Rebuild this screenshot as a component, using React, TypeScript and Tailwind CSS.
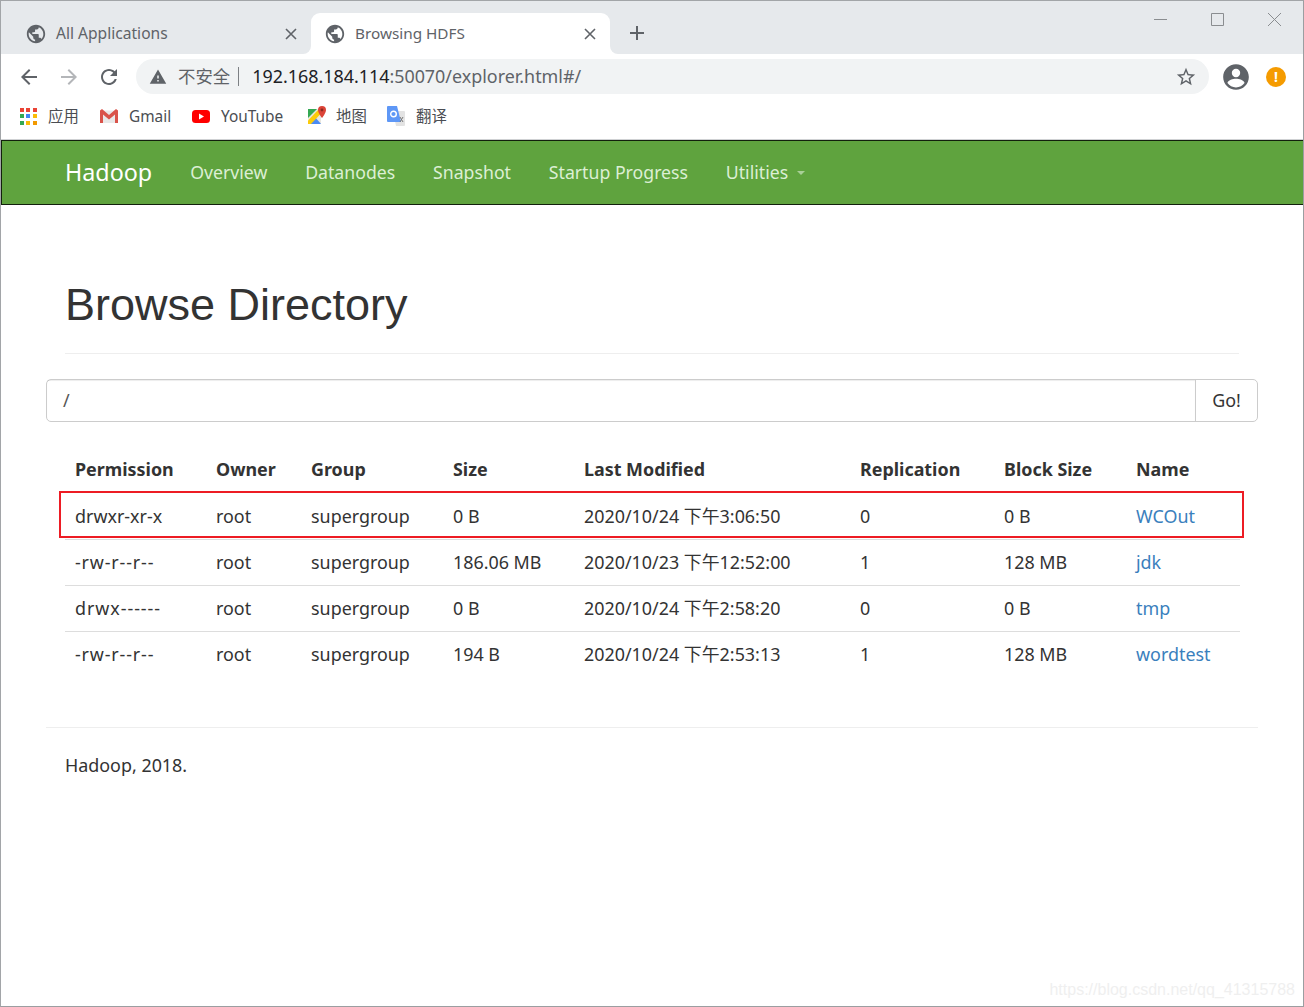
const FONT = "font-['Noto_Sans','Noto_Sans_CJK_SC',sans-serif]";

const PUBLIC_ICON = "M12 2C6.48 2 2 6.48 2 12s4.48 10 10 10 10-4.48 10-10S17.52 2 12 2zm-1 17.93c-3.95-.49-7-3.85-7-7.93 0-.62.08-1.21.21-1.79L9 15v1c0 1.1.9 2 2 2v1.93zm6.9-2.54c-.26-.81-1-1.39-1.9-1.39h-1v-3c0-.55-.45-1-1-1H8v-2h2c.55 0 1-.45 1-1V7h2c1.1 0 2-.9 2-2v-.41c2.93 1.19 5 4.06 5 7.41 0 2.08-.8 3.97-2.1 5.39z";

const rows = [
  { perm: "drwxr-xr-x", spacing: "", size: "0 B", modified: "2020/10/24 下午3:06:50", repl: "0", block: "0 B", name: "WCOut" },
  { perm: "-rw-r--r--", spacing: "tracking-[0.85px]", size: "186.06 MB", modified: "2020/10/23 下午12:52:00", repl: "1", block: "128 MB", name: "jdk" },
  { perm: "drwx------", spacing: "tracking-[0.95px]", size: "0 B", modified: "2020/10/24 下午2:58:20", repl: "0", block: "0 B", name: "tmp" },
  { perm: "-rw-r--r--", spacing: "tracking-[0.85px]", size: "194 B", modified: "2020/10/24 下午2:53:13", repl: "1", block: "128 MB", name: "wordtest" },
];

const headers = ["Permission", "Owner", "Group", "Size", "Last Modified", "Replication", "Block Size", "Name"];

function Globe() {
  return (
    <svg viewBox="0 0 24 24" className="w-[22px] h-[22px] shrink-0" fill="#5f6368">
      <path d={PUBLIC_ICON} />
    </svg>
  );
}

function TabClose() {
  return (
    <svg viewBox="0 0 12 12" className="w-3 h-3 shrink-0" stroke="#5f6368" strokeWidth="1.6" fill="none">
      <path d="M1 1l10 10M11 1L1 11" />
    </svg>
  );
}

function AppsIcon() {
  const colors = ["#ea4335", "#ea4335", "#ea4335", "#34a853", "#4285f4", "#fbbc05", "#34a853", "#fbbc05", "#f29900"];
  return (
    <div className="grid grid-cols-3 gap-[2px] w-[17px] h-[17px] shrink-0">
      {colors.map((c, i) => (
        <span key={i} className="block w-[4px] h-[4px]" style={{ backgroundColor: c }} />
      ))}
    </div>
  );
}

function GmailIcon() {
  return (
    <svg viewBox="0 0 18 14" className="w-[18px] h-[14px] shrink-0">
      <path d="M1 1.500h16V14H1z" fill="#e8e8e8" />
      <path d="M0 1.500V14h3V5.500l6 5 6-5V14h3V1.500L16 0 9 6 2 0z" fill="#d9534a" />
    </svg>
  );
}

function YoutubeIcon() {
  return (
    <svg viewBox="0 0 18 13" className="w-[18px] h-[13px] shrink-0">
      <rect width="18" height="13" rx="3.5" fill="#f00" />
      <path d="M7 3.500v6l5-3z" fill="#fff" />
    </svg>
  );
}

function MapsIcon() {
  return (
    <svg viewBox="0 0 20 20" className="w-5 h-5 shrink-0">
      <path d="M1 3h13v15H1z" fill="#e8e6df" />
      <path d="M1 3h9L1 12z" fill="#34a853" />
      <path d="M1 18h13l-6-7z" fill="#4a8af4" />
      <path d="M1 14.500L11 4l3 1.500v2L4 18H1z" fill="#fbcb0a" />
      <path d="M15 0a4 4 0 0 0-4 4c0 3 4 8 4 8s4-5 4-8a4 4 0 0 0-4-4z" fill="#db4437" />
      <circle cx="15" cy="4" r="1.400" fill="#8c2a20" />
    </svg>
  );
}

function TranslateIcon() {
  return (
    <svg viewBox="0 0 18 20" className="w-[18px] h-5 shrink-0">
      <path d="M6 5h11a1 1 0 0 1 1 1v13a1 1 0 0 1-1 1H9z" fill="#e3e3e3" />
      <path d="M1 0h9l4 16H1a1 1 0 0 1-1-1V1a1 1 0 0 1 1-1z" fill="#5e97f6" />
      <circle cx="6.500" cy="8" r="2.800" fill="none" stroke="#fff" strokeWidth="1.400" />
      <path d="M13 11l3 5M16 11l-3 5" stroke="#777" strokeWidth="1" />
    </svg>
  );
}

function Bookmark({ icon, label, className }: { icon: React.ReactNode; label: string; className: string }) {
  return (
    <div className={`flex items-center ${className}`}>
      {icon}
      <span className="text-[15.4px] text-[#4a4d52]">{label}</span>
    </div>
  );
}

export default function App() {
  return (
    <div className={`${FONT} relative w-[1304px] h-[1007px] overflow-hidden bg-white border border-[#a2a5a8] border-r-[#9b9ea1] border-b-[#9b9ea1]`}>
      {/* tab strip */}
      <div className="h-[53px] bg-[#e6e9ec] flex items-end">
        <div className="w-[310px] h-[41px] flex items-center pl-[24px] pr-[14px] text-[15.6px] text-[#5f6368]">
          <Globe />
          <span className="ml-[9px] flex-1">All Applications</span>
          <TabClose />
        </div>
        <div className="relative w-[299px] h-[41px] bg-white rounded-t-[9px] flex items-center pl-[13px] pr-[14px] text-[15.3px] text-[#5f6368]">
          {/* flared corners at the foot of the active tab */}
          <div className="absolute left-[-8px] bottom-0 w-2 h-2 bg-white"><div className="w-2 h-2 bg-[#e6e9ec] rounded-br-[8px]" /></div>
          <div className="absolute right-[-8px] bottom-0 w-2 h-2 bg-white"><div className="w-2 h-2 bg-[#e6e9ec] rounded-bl-[8px]" /></div>
          <Globe />
          <span className="ml-[9px] flex-1">Browsing HDFS</span>
          <TabClose />
        </div>
        <svg viewBox="0 0 16 16" className="w-4 h-4 ml-[19px] mb-[13px] shrink-0" stroke="#5f6368" strokeWidth="2" fill="none">
          <path d="M8 1v14M1 8h14" />
        </svg>
        <div className="flex-1 self-start flex justify-end items-center pt-[12px] pr-[22px] gap-[44px]">
          <svg viewBox="0 0 13 13" className="w-[13px] h-[13px]" stroke="#8a8d90" fill="none"><path d="M0 6.500h13" /></svg>
          <svg viewBox="0 0 13 13" className="w-[13px] h-[13px]" stroke="#8a8d90" fill="none"><path d="M.5.5h12v12H.5z" /></svg>
          <svg viewBox="0 0 13 13" className="w-[13px] h-[13px]" stroke="#8a8d90" fill="none"><path d="M0 0l13 13M13 0L0 13" /></svg>
        </div>
      </div>

      {/* toolbar */}
      <div className="h-[42px] pt-[3px] flex items-center pl-[16px] pr-[17px]">
        <svg viewBox="0 0 24 24" className="w-6 h-6 shrink-0" fill="#5f6368"><path d="M20 11H7.830l5.590-5.590L12 4l-8 8 8 8 1.410-1.410L7.830 13H20z" /></svg>
        <svg viewBox="0 0 24 24" className="w-6 h-6 ml-[16px] shrink-0" fill="#b4b6b9"><path d="M12 4l-1.410 1.410L16.170 11H4v2h12.170l-5.580 5.590L12 20l8-8z" /></svg>
        <svg viewBox="0 0 24 24" className="w-6 h-6 ml-[16px] shrink-0" fill="#5f6368"><path d="M17.650 6.350C16.200 4.900 14.210 4 12 4c-4.420 0-7.990 3.580-7.990 8s3.570 8 7.990 8c3.730 0 6.840-2.550 7.730-6h-2.080c-.82 2.330-3.040 4-5.650 4-3.310 0-6-2.690-6-6s2.690-6 6-6c1.660 0 3.140.69 4.220 1.780L13 11h7V4l-2.350 2.350z" /></svg>
        <div className="ml-[15px] w-[1073px] h-[35px] rounded-full bg-[#f1f3f4] flex items-center pl-[13px] pr-[12px]">
          <svg viewBox="0 0 24 24" className="w-[18px] h-[18px] shrink-0" fill="#5f6368"><path d="M1 21h22L12 2 1 21zm12-3h-2v-2h2v2zm0-4h-2v-4h2v4z" /></svg>
          <span className="ml-[11px] text-[17.4px] text-[#5f6368]">不安全</span>
          <span className="ml-[8px] w-[1px] h-[19px] bg-[#7d8084]" />
          <span className="ml-[13px] text-[17.9px] text-[#5f6368]">
            <span className="text-[#202124]">192.168.184.114</span>:50070/explorer.html#/
          </span>
          <svg viewBox="0 0 24 24" className="w-[22px] h-[22px] ml-auto shrink-0" fill="#5f6368"><path d="M22 9.240l-7.190-.62L12 2 9.190 8.630 2 9.240l5.460 4.730L5.820 21 12 17.270 18.180 21l-1.630-7.030L22 9.240zM12 15.400l-3.760 2.270 1-4.280-3.320-2.880 4.380-.38L12 6.100l1.710 4.040 4.380.38-3.320 2.880 1 4.280L12 15.400z" /></svg>
        </div>
        <svg viewBox="0 0 24 24" className="w-[28px] h-[28px] ml-[13px] shrink-0" fill="#5f6368"><path d="M12 1C5.900 1 1 5.900 1 12s4.900 11 11 11 11-4.900 11-11S18.100 1 12 1zm0 4a3.600 3.600 0 1 1 0 7.200A3.600 3.600 0 0 1 12 5zm0 16c-3 0-5.700-1.500-7.300-3.800.1-2.300 4.900-3.600 7.300-3.600s7.200 1.300 7.300 3.600C17.700 19.500 15 21 12 21z" /></svg>
        <span className="ml-[16px] w-[20px] h-[20px] rounded-full bg-[#f59b00] flex items-center justify-center text-white text-[14px] font-bold shrink-0">!</span>
      </div>

      {/* bookmarks */}
      <div className="h-[44px] pb-[2px] flex items-center pl-[19px] border-b border-[#cfd1d3]">
        <Bookmark icon={<AppsIcon />} label="应用" className="w-[80px] gap-[11px]" />
        <Bookmark icon={<GmailIcon />} label="Gmail" className="w-[92px] gap-[11px]" />
        <Bookmark icon={<YoutubeIcon />} label="YouTube" className="w-[115px] gap-[11px]" />
        <Bookmark icon={<MapsIcon />} label="地图" className="w-[80px] gap-[9px]" />
        <Bookmark icon={<TranslateIcon />} label="翻译" className="gap-[11px]" />
      </div>

      {/* hadoop nav */}
      <nav className="h-[65px] bg-[#5fa33e] border border-[#12200c] border-r-0 flex items-center pl-[63px] text-[17.7px] text-[#dcefd4]">
        <span className="text-[23.3px] text-white mr-[38px]">Hadoop</span>
        <div className="flex items-center gap-[37.8px]">
          <span>Overview</span>
          <span>Datanodes</span>
          <span>Snapshot</span>
          <span>Startup Progress</span>
          <span className="flex items-center gap-[9px]">
            Utilities
            <span className="w-0 h-0 border-x-[4px] border-x-transparent border-t-[4px] border-t-[#a9cf98] mt-[2px]" />
          </span>
        </div>
      </nav>

      {/* explorer */}
      <main className="px-[45px] text-[17.9px] text-[#333333]">
        <div className="mx-[19px] mt-[72px] pb-[20px] border-b border-[#eeeeee]">
          <h1 className="font-['Liberation_Sans',sans-serif] text-[45px] leading-[56px] text-[#333333]">Browse Directory</h1>
        </div>

        <div className="mt-[25px] h-[43px] flex border border-[#cccccc] rounded-[5px]">
          <div className="flex-1 px-[16px] flex items-center text-[#555555] shadow-[inset_0_1px_1px_rgba(0,0,0,0.075)]">/</div>
          <div className="w-[62px] border-l border-[#cccccc] flex items-center justify-center">Go!</div>
        </div>

        <div className="relative mx-[19px] mt-[25px]">
          <table className="w-[1175px] table-fixed border-collapse">
            <colgroup>
              <col className="w-[141px]" />
              <col className="w-[95px]" />
              <col className="w-[142px]" />
              <col className="w-[131px]" />
              <col className="w-[276px]" />
              <col className="w-[144px]" />
              <col className="w-[132px]" />
              <col className="w-[114px]" />
            </colgroup>
            <thead>
              <tr className="h-[46px]">
                {headers.map((h) => (
                  <th key={h} className="text-left font-bold pl-[10px] pb-[2px]">{h}</th>
                ))}
              </tr>
            </thead>
            <tbody>
              {rows.map((r, i) => (
                <tr key={r.name} className={`h-[46px] ${i === 0 ? "[&>td]:pt-[2px]" : ""} ${i < rows.length - 1 ? "border-b border-[#dddddd]" : ""}`}>
                  <td className={`pl-[10px] ${r.spacing}`}>{r.perm}</td>
                  <td className="pl-[10px]">root</td>
                  <td className="pl-[10px]">supergroup</td>
                  <td className="pl-[10px]">{r.size}</td>
                  <td className="pl-[10px]">{r.modified}</td>
                  <td className="pl-[10px]">{r.repl}</td>
                  <td className="pl-[10px]">{r.block}</td>
                  <td className="pl-[10px] text-[#3a80bd]">{r.name}</td>
                </tr>
              ))}
            </tbody>
          </table>
          {/* red annotation drawn over the first row */}
          <div className="absolute left-[-6px] top-[44px] w-[1185px] h-[47px] border-2 border-[#ed1c24]" />
        </div>

        <div className="mt-[50px] border-t border-[#eeeeee] pt-[24px] pl-[19px]">Hadoop, 2018.</div>
      </main>

      {/* dark window edge showing behind the page */}
      <div className="absolute left-[-1px] top-[204px] w-[1px] h-[765px] bg-[#2f5a6e]" />
      <div className="absolute right-[-1px] top-[140px] w-[1px] h-[829px] bg-[#7f8c94]" />

      <span className="absolute right-[8px] bottom-[4px] font-['Liberation_Sans',sans-serif] text-[16px] text-[#efefef]">https://blog.csdn.net/qq_41315788</span>
    </div>
  );
}
